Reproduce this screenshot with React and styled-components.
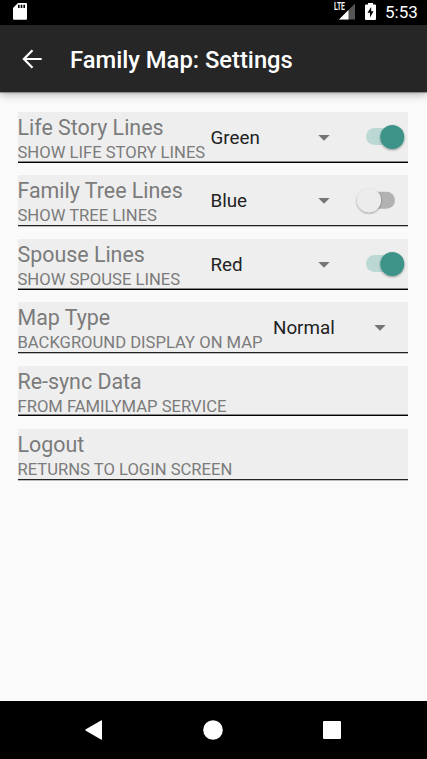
import React from 'react';
import styled, { createGlobalStyle } from 'styled-components';

const GlobalStyle = createGlobalStyle`
  * { box-sizing: border-box; }
  body { margin: 0; background: #fafafa; }
`;

const Screen = styled.div`
  width: 427px;
  height: 759px;
  display: flex;
  flex-direction: column;
  overflow: hidden;
  background: #fafafa;
  font-family: Roboto, "Liberation Sans", sans-serif;
  white-space: nowrap;
`;

const StatusBar = styled.div`
  flex: none;
  height: 25.4px;
  display: flex;
  align-items: flex-start;
  padding: 0 9px 0 12px;
  background: #000;
  color: #fff;
`;

const StatusIcon = styled.svg`
  flex: none;
  display: block;
  width: ${({ $w }) => $w}px;
  height: 25px;
  margin-left: ${({ $gap = 0 }) => $gap}px;
`;

const Spacer = styled.div`
  flex: 1;
`;

const Clock = styled.span`
  font-size: 17px;
  font-weight: 450;
  line-height: 25px;
  width: 33px;
  margin-left: 9px;
`;

const AppBar = styled.header`
  flex: none;
  height: 66.6px;
  display: flex;
  align-items: center;
  padding: 0 22px;
  gap: 28px;
  background: #262626;
  color: #fff;
  box-shadow: 0 1px 1px rgba(0, 0, 0, 0.3), 0 3px 8px rgba(0, 0, 0, 0.26);
`;

const BackIcon = styled.svg`
  flex: none;
  width: 20px;
  height: 20px;
`;

const Heading = styled.h1`
  margin: 2px 0 0;
  font-size: 23.75px;
  font-weight: 500;
  line-height: 28px;
`;

const List = styled.main`
  flex: 1;
  display: flex;
  flex-direction: column;
  gap: 12.6px;
  padding: 20px 19px 0 17.5px;
`;

const Row = styled.section`
  height: 50.8px;
  display: flex;
  background: #eee;
  border-bottom: 1px solid #000;

  &:nth-child(odd) {
    box-shadow: inset 0 -1px 0 #888;
  }

  &:nth-child(even) {
    border-bottom-color: #222;
    box-shadow: 0 1px 0 #bbb;
  }
`;

const Labels = styled.div`
  flex: none;
  width: ${({ $w }) => $w}px;
  color: #7b7b7b;
`;

const Label = styled.div`
  font-size: 21.4px;
  line-height: 25px;
  padding-top: 3px;
`;

const Caption = styled.div`
  font-size: 16.63px;
  line-height: 20px;
  padding-top: 3px;
`;

const Spinner = styled.div`
  flex: none;
  width: ${({ $w }) => $w}px;
  display: flex;
  align-items: center;
  justify-content: space-between;
  padding-top: 2px;
  font-size: 18.8px;
  color: #222;
`;

const Caret = styled.svg`
  width: 12px;
  height: 6px;
`;

const Toggle = styled.svg`
  flex: none;
  width: 66px;
  height: 48px;
  margin-left: 12px;
`;

const NavBar = styled.nav`
  flex: none;
  height: 57.6px;
  display: flex;
  align-items: center;
  justify-content: space-between;
  padding: 0 85px 0 84px;
  background: #000;
`;

const NavIcon = styled.svg`
  width: 20px;
  height: 20px;
`;

function Switch({ on }) {
  return (
    <Toggle viewBox="0 0 66 48">
      <defs>
        <filter id="thumb" x="-30%" y="-30%" width="160%" height="170%">
          <feDropShadow dx="0" dy="1" stdDeviation="0.9" floodOpacity="0.4" />
        </filter>
      </defs>
      <rect x="24" y={on ? 16 : 16.8} width="29" height="17" rx="8.5" fill={on ? '#bbd8d5' : '#b2b2b2'} />
      <circle cx={on ? 50.3 : 27} cy={on ? 25 : 25.3} r="12" fill={on ? '#3e9387' : '#ececec'} filter="url(#thumb)" />
    </Toggle>
  );
}

const settings = [
  { label: 'Life Story Lines', caption: 'SHOW LIFE STORY LINES', value: 'Green', on: true },
  { label: 'Family Tree Lines', caption: 'SHOW TREE LINES', value: 'Blue', on: false },
  { label: 'Spouse Lines', caption: 'SHOW SPOUSE LINES', value: 'Red', on: true },
  { label: 'Map Type', caption: 'BACKGROUND DISPLAY ON MAP', value: 'Normal', wide: true },
  { label: 'Re-sync Data', caption: 'FROM FAMILYMAP SERVICE' },
  { label: 'Logout', caption: 'RETURNS TO LOGIN SCREEN' },
];

export default function App() {
  return (
    <Screen>
      <GlobalStyle />
      <StatusBar>
        <StatusIcon $w={16} viewBox="0 0 16 25">
          <path d="M6 3h8q1 0 1 1v14.700q0 1-1 1H2q-1 0-1-1V8z" fill="#fff" />
          <path d="M6 4.700h1.600V8H6zM8.700 4.700h1.600V8H8.700zM11.400 4.700H13V8h-1.600z" fill="#000" />
        </StatusIcon>
        <Spacer />
        <StatusIcon $w={22} viewBox="0 0 22 25">
          <path d="M21 3.500v16H5z" fill="#555" />
          <path d="M14.500 10v9.500H5z" fill="#fff" />
          <path d="M0 2h11.500v8.800H0z" fill="#000" />
          <text x="0" y="10.400" fontSize="10.300" fontWeight="600" textLength="11" lengthAdjust="spacingAndGlyphs" fill="#fff">LTE</text>
        </StatusIcon>
        <StatusIcon $w={11} $gap={9} viewBox="0 0 11 25">
          <path d="M3 3h5v1.500h2q1 0 1 1V19q0 1-1 1H1q-1 0-1-1V5.500q0-1 1-1h2z" fill="#fff" />
          <path d="M6.200 7L2.500 12.800H5V17.500L8.500 11.200H6.200z" fill="#000" />
        </StatusIcon>
        <Clock>5:53</Clock>
      </StatusBar>
      <AppBar>
        <BackIcon viewBox="0 0 20 20" fill="none" stroke="#fff" strokeWidth="2.200">
          <path d="M19.700 10H2.500M10.500 1.300L1.900 10l8.600 8.700" />
        </BackIcon>
        <Heading>Family Map: Settings</Heading>
      </AppBar>
      <List>
        {settings.map(({ label, caption, value, on, wide }) => (
          <Row key={label}>
            <Labels $w={wide ? 255.5 : 193}>
              <Label>{label}</Label>
              <Caption>{caption}</Caption>
            </Labels>
            {value && (
              <Spinner $w={wide ? 113 : 119.5}>
                {value}
                <Caret viewBox="0 0 12 6">
                  <path d="M0.300 0h11.400L6 5.800z" fill="#757575" />
                </Caret>
              </Spinner>
            )}
            {on !== undefined && <Switch on={on} />}
          </Row>
        ))}
      </List>
      <NavBar>
        <NavIcon viewBox="0 0 20 20">
          <path d="M1.800 9.300L17 .4q1-.5 1 .6v18q0 1.100-1 .6L1.800 10.700q-1-.7 0-1.400z" fill="#fff" />
        </NavIcon>
        <NavIcon viewBox="0 0 20 20"><circle cx="10" cy="10" r="9.800" fill="#fff" /></NavIcon>
        <NavIcon viewBox="0 0 20 20"><rect x="1" y="1" width="18" height="18" rx="1" fill="#fff" /></NavIcon>
      </NavBar>
    </Screen>
  );
}
